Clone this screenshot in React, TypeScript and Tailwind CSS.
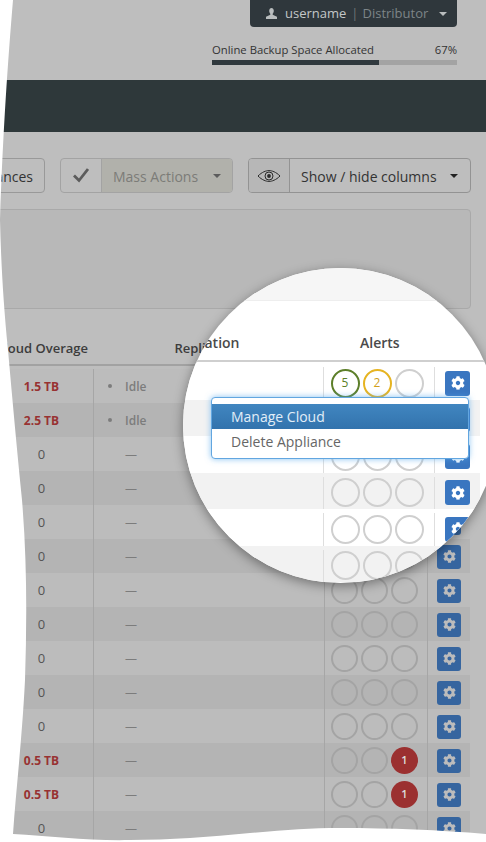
import { FaCog } from "react-icons/fa";

const overage = ["1.5 TB", "2.5 TB", "0", "0", "0", "0", "0", "0", "0", "0", "0", "0.5 TB", "0.5 TB", "0"];

const Caret = ({ className }: { className: string }) => (
  <span className={`h-0 w-0 border-x-[4px] border-t-[4px] border-x-transparent ${className}`} />
);

const EyeIcon = () => (
  <svg width="24" height="12" viewBox="0 0 24 12" fill="none" stroke="#2b2b2b">
    <path d="M1 6 C5 2 9 .6 12 .6 C15 .6 19 2 23 6 C19 10 15 11.4 12 11.4 C9 11.4 5 10 1 6 Z" strokeWidth="1" />
    <circle cx="12" cy="6" r="4" strokeWidth="1" />
    <circle cx="12" cy="6" r="1.9" fill="#2b2b2b" stroke="none" />
  </svg>
);

const CheckIcon = () => (
  <svg width="16" height="15" viewBox="0 0 16 15" fill="none" stroke="#5c5c5c" strokeWidth="2.8">
    <path d="M1 7.5 L6 12.5 L15 1" />
  </svg>
);

const UserIcon = () => (
  <svg width="11" height="11" viewBox="0 0 11 11" fill="#b9bdbe">
    <path d="M3.2 2.8 C3.2 1.2 4.2 0 5.5 0 C6.8 0 7.8 1.2 7.8 2.8 C7.8 4.2 7.2 5.2 6.7 5.8 V6.8 L11 8.8 V11 H0 V8.8 L4.3 6.8 V5.8 C3.8 5.2 3.2 4.2 3.2 2.8 Z" />
  </svg>
);

// base table, sits dimmed behind the lens
const BaseRow = ({ value, index }: { value: string; index: number }) => {
  const over = value !== "0";
  const red = index === 11 || index === 12;
  return (
    <div className={`grid h-[34px] grid-cols-[104px_230px_104px_42px] ${index % 2 ? "bg-[#b4b4b4]" : "bg-[#bcbcbc]"}`}>
      <div className={`flex items-center justify-center border-r border-[#a6a6a6] pt-[2px] ${over ? "text-[12px] font-bold text-[#983232]" : "text-[13px] text-[#555]"}`}>
        {value}
      </div>
      <div className="flex items-center pl-[31px] pt-[2px] text-[12px] font-semibold text-[#7c7c7c]">
        {index < 2 ? (
          <span className="relative">
            <span className="absolute -left-[17px] top-[6px] h-[4px] w-[4px] rounded-full bg-[#7c7c7c]" />
            Idle
          </span>
        ) : (
          <span className="font-normal">—</span>
        )}
      </div>
      <div className="flex items-center justify-center gap-[3px] border-x border-[#a6a6a6] pr-[3px]">
        <span className="h-[27px] w-[27px] rounded-full border-2 border-[#a4a4a4]" />
        <span className="h-[27px] w-[27px] rounded-full border-2 border-[#a4a4a4]" />
        {red ? (
          <span className="flex h-[27px] w-[27px] items-center justify-center rounded-full bg-[#9b3030] text-[11px] font-semibold text-[#ddd]">1</span>
        ) : (
          <span className="h-[27px] w-[27px] rounded-full border-2 border-[#a4a4a4]" />
        )}
      </div>
      <div className="flex items-center justify-center pt-[1px]">
        <span className="flex h-[24px] w-[24px] items-center justify-center rounded-[3px] bg-[#36659f] text-[13px] text-[#bcbcbc]">
          <FaCog />
        </span>
      </div>
    </div>
  );
};

const LensRow = ({ index }: { index: number }) => (
  <div className={`grid h-[36.5px] w-[297px] grid-cols-[141px_111px_45px] pt-[4px] ${index % 2 ? "bg-[#f2f2f2]" : "bg-white"}`}>
    <div className="border-r border-[#dedede]" />
    <div className="flex items-center justify-center gap-[3px] border-r border-[#dedede] pr-[4px]">
      {index === 0 ? (
        <>
          <span className="flex h-[29px] w-[29px] items-center justify-center rounded-full border-2 border-[#5d7f2a] text-[12px] text-[#5d7f2a]">5</span>
          <span className="flex h-[29px] w-[29px] items-center justify-center rounded-full border-2 border-[#e6b422] text-[12px] text-[#d19f1a]">2</span>
        </>
      ) : (
        <>
          <span className="h-[29px] w-[29px] rounded-full border-2 border-[#cfcfcf]" />
          <span className="h-[29px] w-[29px] rounded-full border-2 border-[#cfcfcf]" />
        </>
      )}
      <span className="h-[29px] w-[29px] rounded-full border-2 border-[#cfcfcf]" />
    </div>
    <div className="flex items-center pl-[10px]">
      <span className="flex h-[25px] w-[25px] items-center justify-center rounded-[3px] bg-[#3a76c0] text-[14px] text-white">
        <FaCog />
      </span>
    </div>
  </div>
);

export default function App() {
  return (
    <div className="relative h-[842px] w-[486px] overflow-hidden bg-[#bebebe] font-['Open_Sans',sans-serif]">
      {/* User bar */}
      <div className="ml-[250px] flex h-[27px] w-[207px] items-center rounded-b-[4px] bg-[#2f373c] pl-[16px] text-[13px]">
        <UserIcon />
        <span className="ml-[8px] text-[#c3c7c8]">username</span>
        <span className="ml-[5px] mr-[4px] text-[#6d7578]">|</span>
        <span className="text-[#7d8588]">Distributor</span>
        <Caret className="ml-[11px] border-t-[#b9bdbe]" />
      </div>

      {/* Backup space */}
      <div className="ml-[212px] mt-[15px] w-[245px]">
        <div className="flex h-[16px] items-center justify-between text-[11.3px] text-[#333]">
          <span>Online Backup Space Allocated</span>
          <span>67%</span>
        </div>
        <div className="mt-[2px] h-[5px] bg-[#a3a3a3]">
          <div className="h-full w-[167px] bg-[#30393e]" />
        </div>
      </div>

      <div className="mt-[15px] h-[52px] bg-[#2e383a]" />

      {/* Toolbar */}
      <div className="mt-[26px] flex h-[35px] justify-end gap-[15px] pr-[15px] text-[14px]">
        <div className="flex w-[100px] shrink-0 items-center justify-end rounded-[4px] border border-[#999] pr-[11px] pt-[1px] text-[#333]">
          Appliances
        </div>
        <div className="flex w-[173px] shrink-0 overflow-hidden rounded-[4px] border border-[#a3a3a3]">
          <div className="flex w-[41px] items-center justify-center border-r border-[#a3a3a3]">
            <CheckIcon />
          </div>
          <div className="flex flex-1 items-center bg-[#b1b1ab] pl-[11px] pt-[1px] text-[#7c7c78]">
            Mass Actions
            <Caret className="ml-[15px] border-t-[#5c5c5c]" />
          </div>
        </div>
        <div className="flex w-[223px] shrink-0 overflow-hidden rounded-[4px] border border-[#939393]">
          <div className="flex w-[41px] items-center justify-center border-r border-[#939393] bg-[#b7b7b7]">
            <EyeIcon />
          </div>
          <div className="flex flex-1 items-center pl-[11px] pt-[1px] text-[#333]">
            Show / hide columns
            <Caret className="ml-[13px] border-t-[#222]" />
          </div>
        </div>
      </div>

      {/* Filter panel */}
      <div className="ml-[-5px] mt-[16px] h-[100px] w-[476px] rounded-[4px] border border-[#a9a9a9] bg-[#b8b8b8]" />

      {/* Table */}
      <div className="ml-[-10px] w-[480px]">
        <div className="grid h-[57px] grid-cols-[104px_230px_104px_42px] items-end border-b-2 border-[#a2a2a2] pb-[6px] text-[13px] font-semibold text-[#3c3c3c]">
          <span className="whitespace-nowrap text-center">Cloud Overage</span>
          <span className="pl-[1px] text-center">Replication</span>
        </div>
        <div className="mt-[3px]">
          {overage.map((value, index) => (
            <BaseRow key={index} value={value} index={index} />
          ))}
        </div>
      </div>

      {/* Torn page edge */}
      <svg className="absolute left-0 top-0" width="486" height="842" viewBox="0 0 486 842" fill="#fff">
        <path d="M0 0 H13 C8 60 3 130 0 220 C1 260 3 300 8 350 C12 395 17 450 22 500 C27 560 27 620 25 680 C22 740 16 790 13 834 C50 836 90 841 130 840 C170 840 210 837 250 833 C285 830 310 828 340 828 C390 828 440 830 486 834 V842 H0 Z" />
      </svg>

      {/* Magnifier */}
      <div className="absolute left-[183px] top-[268px] h-[315px] w-[315px] overflow-hidden rounded-full bg-white shadow-[0_3px_12px_rgba(0,0,0,0.4)]">
        <div className="h-[33px] border-b border-[#eee] bg-[#f6f6f6]" />
        <div className="relative h-[61px] border-b-2 border-[#cfcfcf] text-[14px] font-semibold text-[#4a4a4a]">
          <span className="absolute left-[-19px] top-[31px]">Replication</span>
          <span className="absolute left-[177px] top-[31px]">Alerts</span>
        </div>
        <div className="mt-[1px]">
          {[0, 1, 2, 3, 4, 5].map((index) => (
            <LensRow key={index} index={index} />
          ))}
        </div>

        {/* Action menu */}
        <div className="absolute left-[28px] top-[129px] h-[62px] w-[258px] rounded-[4px] border border-[#62a6e0] bg-white pt-[6px] text-[14px] shadow-[0_0_6px_rgba(82,168,236,0.7)]">
          <div className="flex h-[25px] items-center bg-gradient-to-b from-[#4186c0] to-[#3273ad] pl-[19px] text-[#e2eef8]">Manage Cloud</div>
          <div className="flex h-[25px] items-center pl-[19px] text-[#666]">Delete Appliance</div>
        </div>
      </div>
    </div>
  );
}
